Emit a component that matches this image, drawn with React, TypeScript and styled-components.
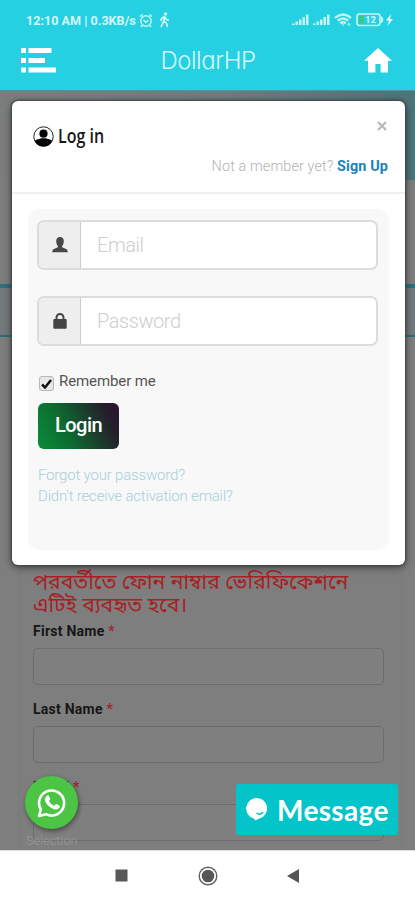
import React from "react";
import styled, { createGlobalStyle } from "styled-components";

const GlobalStyle = createGlobalStyle`
  *, *::before, *::after { box-sizing: border-box; }
  html, body { margin: 0; padding: 0; background: #fff; }
  body { font-family: Roboto, "Noto Sans", sans-serif; overflow: hidden; }
`;

const Screen = styled.div`
  display: flex;
  flex-direction: column;
  width: 415px;
  height: 900px;
  overflow: hidden;
`;

const TopArea = styled.header`
  height: 90px;
  flex: none;
  background: #25d0e3;
  color: #fff;
`;

const StatusBar = styled.div`
  height: 40px;
  padding: 0 21px 0 26px;
  display: flex;
  align-items: center;
  justify-content: space-between;
  color: #d4f7fa;
`;

const StatusGroup = styled.div<{ $gap: number }>`
  display: flex;
  align-items: center;
  gap: ${(p) => p.$gap}px;
`;

const StatusText = styled.span`
  width: 110px;
  flex: none;
  font-size: 12.6px;
  font-weight: 700;
  white-space: nowrap;
`;

const AppBar = styled.div`
  height: 40px;
  padding: 0 23px 0 21px;
  display: grid;
  grid-template-columns: 40px 1fr 40px;
  align-items: center;
`;

const HomeSlot = styled.div`
  display: flex;
  justify-content: flex-end;
`;

const Brand = styled.h1`
  margin: 0;
  padding: 1px 0 0 3px;
  text-align: center;
  font: 300 24px/28px Inter, sans-serif;
  font-feature-settings: "cv11", "ss03";
  letter-spacing: -0.45px;
  color: #d5f8fb;
`;

const Page = styled.main`
  position: relative;
  flex: none;
  height: 760px;
  overflow: hidden;
  background: #7e7e7e;
`;

const Hero = styled.div`
  height: 90px;
  border-top: 1px solid #55939a;
  background: linear-gradient(90deg, #7c7e7e 0%, #6d7c7e 55%, #4d7479 100%);
`;

const HeroGap = styled.div`
  height: 104px;
`;

const TabStrip = styled.div`
  height: 53px;
  border-top: 4px solid #2e6f80;
  border-bottom: 2px solid #277278;
  background: #74797b;
`;

const FormCard = styled.section`
  height: 513px;
  margin: 0 13px 0 19px;
  padding: 236px 19px 0 13px;
  border: solid #797979;
  border-width: 0 1px;
`;

const Notice = styled.p`
  margin: 0;
  width: 340px;
  height: 46px;
  color: #a81f25;
  font: 400 21.1px/23px "Noto Sans Bengali", "Noto Sans", sans-serif;
  white-space: nowrap;
`;

const Label = styled.label`
  display: block;
  height: 29px;
  padding-top: 2px;
  font-size: 14px;
  line-height: 20px;
  font-weight: 700;
  color: #161616;
  letter-spacing: 0.25px;
`;

const Star = styled.span`
  color: #a0272e;
  font-weight: 700;
`;

const Field = styled.div`
  width: 351px;
  height: 37px;
  margin-bottom: 12px;
  border: 1px solid #6c6c6c;
  border-radius: 5px;
  background: #7f7f7f;
`;

const Modal = styled.div`
  position: absolute;
  left: 12px;
  top: 11px;
  width: 393px;
  height: 464px;
  border-radius: 6px;
  background: #fff;
  box-shadow: 0 0 2px 1px #444, 0 2px 8px rgba(0, 0, 0, 0.55);
`;

const ModalHead = styled.div`
  height: 93px;
  padding: 13px 17px 0 21px;
  border-bottom: 2px solid #efefef;
  display: flex;
  flex-direction: column;
`;

const HeadRow = styled.div`
  height: 40px;
  display: flex;
  justify-content: space-between;
`;

const Title = styled.h2`
  margin: 9px 0 0;
  display: flex;
  align-items: center;
  gap: 4px;
  height: 26px;
`;

const TitleText = styled.span`
  font: 650 20px/26px "Open Sans", sans-serif;
  color: #171717;
  transform: scaleX(0.8);
  transform-origin: left;
`;

const Close = styled.button`
  width: 12px;
  height: 24px;
  padding: 0;
  border: 0;
  background: none;
  display: flex;
  align-items: center;
  justify-content: center;
`;

const Prompt = styled.p`
  margin: 3px 0 0;
  text-align: right;
  font-size: 14.4px;
  line-height: 20px;
  font-weight: 300;
  letter-spacing: 0.12px;
  color: #b1b1b1;
`;

const SignUp = styled.a`
  color: #1b82bd;
  font-weight: 700;
`;

const Well = styled.form`
  margin: 15px 16px 0;
  height: 341px;
  padding: 11px 9px 0 9px;
  border-radius: 12px;
  background: #f8f8f8;
`;

const InputGroup = styled.div`
  height: 50px;
  width: 341px;
  margin-bottom: 26px;
  display: flex;
  border: 2px solid #dcdcdc;
  border-radius: 7px;
  overflow: hidden;
  background: #fff;
`;

const Addon = styled.span`
  width: 42px;
  flex: none;
  display: flex;
  align-items: center;
  justify-content: center;
  background: #eee;
  border-right: 1px solid #ccc;
`;

const Input = styled.input`
  flex: 1;
  min-width: 0;
  border: 0;
  outline: 0;
  padding: 0 16px 1px;
  background: transparent;
  font: 300 20px/24px Roboto, sans-serif;
  letter-spacing: -0.45px;
  &::placeholder { color: #cdcdcd; opacity: 1; }
`;

const Remember = styled.div`
  height: 31px;
  display: flex;
  align-items: flex-start;
  gap: 5px;
  padding-left: 2px;
  font-size: 15px;
  line-height: 19px;
  color: #555;
  letter-spacing: -0.1px;
`;

const CheckBox = styled.span`
  width: 15px;
  height: 15px;
  margin-top: 4px;
  border: 1px solid #b7b7b7;
  border-radius: 3px;
  background: #e8e8e8;
  display: flex;
  align-items: center;
  justify-content: center;
`;

const LoginButton = styled.button`
  display: block;
  width: 81px;
  height: 46px;
  margin-left: 1px;
  padding: 0 0 2px;
  border: 0;
  border-radius: 6px;
  background: linear-gradient(65deg, #098c38 0%, #0d6b31 35%, #24202b 82%, #2b1230 100%);
  color: #fff;
  font: 500 20px/24px Roboto, sans-serif;
  letter-spacing: -0.5px;
`;

const HelpLinks = styled.div`
  margin: 16px 0 0 1px;
  display: flex;
  flex-direction: column;
  font-size: 15px;
  line-height: 21px;
  font-weight: 300;
  color: #a5d0d8;
  white-space: nowrap;
`;

const HelpLink = styled.a`
  letter-spacing: -0.18px;
`;

const WhatsApp = styled.button`
  position: absolute;
  left: 25px;
  top: 686px;
  width: 53px;
  height: 53px;
  padding: 0;
  border: 0;
  border-radius: 50%;
  background: #4bc543;
  display: flex;
  align-items: center;
  justify-content: center;
  box-shadow: 1px 2px 5px rgba(0, 0, 0, 0.45);
`;

const MessageButton = styled.button`
  position: absolute;
  left: 236px;
  top: 694px;
  width: 162px;
  height: 51px;
  padding: 0 0 0 10px;
  border: 0;
  border-radius: 3px;
  background: #03c4c9;
  color: #fff;
  display: flex;
  align-items: center;
  gap: 9px;
  font: 700 28px/34px Lato, sans-serif;
  letter-spacing: 0.35px;
`;

const FooterHint = styled.span`
  position: absolute;
  left: 26px;
  top: 744px;
  font-size: 12.5px;
  line-height: 14px;
  color: #929292;
`;

const NavBar = styled.nav`
  height: 50px;
  flex: none;
  background: #fff;
  border-top: 1px solid #ddd;
  padding: 0 115px 0 115px;
  display: flex;
  align-items: center;
  justify-content: space-between;
`;

const Signal = () => (
  <svg width="17" height="12" viewBox="0 0 17 12" fill="#c4f5f5">
    <path d="M0 9.5h2.5V11H0zM3.5 7.5H6V11H3.5zM7 5.5h2.5V11H7zM10.5 3H13v8h-2.5zM14 .5h2.5V11H14z" />
  </svg>
);

const FormField = ({ name }: { name: string }) => (
  <>
    <Label>{name} <Star>*</Star></Label>
    <Field />
  </>
);

export default function App() {
  return (
    <Screen>
      <GlobalStyle />
      <TopArea>
        <StatusBar>
          <StatusGroup $gap={3}>
            <StatusText>12:10 AM | 0.3KB/s</StatusText>
            <svg width="14" height="15" viewBox="0 0 14 15" fill="none" stroke="#c9f6f7" strokeWidth="1.4">
              <circle cx="7" cy="8" r="5.2" />
              <path d="M1 3.5 3.6 1.5M13 3.5 10.4 1.5M4.5 7 7 9.5 9.5 7M3 12.5 2 14M11 12.5 12 14" />
            </svg>
            <svg width="20" height="16" viewBox="0 0 20 16" fill="none" stroke="#d4f7fa" strokeWidth="1.7">
              <circle cx="9.5" cy="2" r="1.7" fill="#d4f7fa" stroke="none" />
              <path d="M8.5 4.5 7.8 9 5 15M8.5 4.5 5.5 6.5 5 9M8.5 4.5 10.5 7.5 13 8.5M8 9 10.5 11.5 11.5 15" />
            </svg>
          </StatusGroup>
          <StatusGroup $gap={4}>
            <Signal />
            <Signal />
            <svg width="18" height="14" viewBox="0 0 18 14" fill="none" stroke="#c4f5f5" strokeWidth="2.3">
              <path d="M1 4.8Q9-1.8 17 4.8M3.7 7.7Q9 3.3 14.3 7.7M6.3 10.3Q9 8.1 11.7 10.3" />
              <path d="M9 13 7.5 11.4h3Z" fill="#c4f5f5" stroke="none" />
              <circle cx="15" cy="11.5" r="1" strokeWidth="1" />
            </svg>
            <svg width="38" height="14" viewBox="0 0 38 14">
              <rect x="1" y="1" width="23" height="11.5" rx="2.5" fill="none" stroke="#c4f5f5" strokeWidth="1.6" />
              <path d="M25.5 3.5 27 6.8 25.5 10Z" fill="#c4f5f5" stroke="#c4f5f5" />
              <rect x="3" y="3" width="4.5" height="7.5" fill="#3cc878" />
              <text x="9" y="10.2" fontFamily="Roboto" fontSize="9.5" fontWeight="700" fill="#d4f7fa">12</text>
              <path d="M35 1 30 7.5h3L31.5 13 37 6h-3Z" fill="#e4fbfc" />
            </svg>
          </StatusGroup>
        </StatusBar>
        <AppBar>
          <svg width="35" height="25" viewBox="0 0 35 25" fill="#fff">
            <path d="M0 0h5v5H0zM7.5 0h23v5h-23zM0 10h5v5H0zM7.5 10h16.5v5H7.5zM0 19.5h5v5H0zM7.5 19.5H35v5H7.5z" />
          </svg>
          <Brand>DollarHP</Brand>
          <HomeSlot>
            <svg width="28" height="25" viewBox="0 0 28 25" fill="#fff">
              <path d="M14 0 28 12.7H24V24.5H16.6V16H11.4V24.5H4V12.7H0Z" />
            </svg>
          </HomeSlot>
        </AppBar>
      </TopArea>

      <Page>
        <Hero />
        <HeroGap />
        <TabStrip />
        <FormCard>
          <Notice>পরবর্তীতে ফোন নাম্বার ভেরিফিকেশনে<br />এটিই ব্যবহৃত হবে।</Notice>
          <FormField name="First Name" />
          <FormField name="Last Name" />
          <FormField name="Email" />
        </FormCard>

        <Modal>
          <ModalHead>
            <HeadRow>
              <Title>
                <svg width="21" height="21" viewBox="0 0 21 21">
                  <circle cx="10.5" cy="10.5" r="9.7" fill="#fff" stroke="#222" strokeWidth="1" />
                  <circle cx="10.5" cy="7.7" r="4.1" fill="#050505" />
                  <path d="M1.6 15C3 13 7 13 8 12.2h5c1 .8 5 .8 6.4 2.8a9.9 9.9 0 0 1-17.8 0Z" fill="#050505" />
                </svg>
                <TitleText>Log in</TitleText>
              </Title>
              <Close aria-label="Close">
                <svg width="10" height="10" viewBox="0 0 10 10" stroke="#b9b9b9" strokeWidth="2.3">
                  <path d="m1 1 8 8M9 1 1 9" />
                </svg>
              </Close>
            </HeadRow>
            <Prompt>Not a member yet? <SignUp>Sign Up</SignUp></Prompt>
          </ModalHead>
          <Well>
            <InputGroup>
              <Addon>
                <svg width="16" height="16" viewBox="0 0 16 16" fill="#484848">
                  <path d="M8 0c2.7 0 3.8 1.7 3.8 4.2 0 2.2-.8 3.7-1.7 4.8v1.3l4 1.7c1 .5 1.6 1.3 1.6 3.2H.3c0-1.9.6-2.7 1.6-3.2l4-1.7V9C5 7.9 4.2 6.4 4.2 4.2 4.2 1.7 5.3 0 8 0Z" />
                </svg>
              </Addon>
              <Input placeholder="Email" />
            </InputGroup>
            <InputGroup>
              <Addon>
                <svg width="14" height="16" viewBox="0 0 14 16">
                  <path d="M3.5 7V4.5a3.5 3.5 0 0 1 7 0V7" fill="none" stroke="#444" strokeWidth="2" />
                  <rect x=".3" y="6" width="13.4" height="9.7" rx="1" fill="#444" />
                </svg>
              </Addon>
              <Input type="password" placeholder="Password" />
            </InputGroup>
            <Remember>
              <CheckBox>
                <svg width="11" height="10" viewBox="0 0 11 10" fill="none" stroke="#111" strokeWidth="2.5">
                  <path d="m1 5.5 3 3L10 1" />
                </svg>
              </CheckBox>
              Remember me
            </Remember>
            <LoginButton type="button">Login</LoginButton>
            <HelpLinks>
              <HelpLink>Forgot your password?</HelpLink>
              <HelpLink>Didn't receive activation email?</HelpLink>
            </HelpLinks>
          </Well>
        </Modal>

        <FooterHint>Selection</FooterHint>
        <WhatsApp aria-label="WhatsApp">
          <svg width="30" height="30" viewBox="0 0 30 30">
            <path d="M2 28 3.9 21.5A12.5 12.5 0 1 1 9 26.2Z" fill="none" stroke="#fff" strokeWidth="2.6" strokeLinejoin="round" />
            <path d="M10.3 7.5c.8-.3 1.5-.1 1.8.7l1 2.4c.2.6 0 1.1-1.1 2.4 1.4 2.6 3 3.9 5.3 4.8 1.3-1.8 1.6-2.1 2.2-1.8l2.8 1.4c.8.5.6 1.7-.1 2.7-1 1.3-3 1.9-5.2 1.1-4.5-1.5-7.6-4.7-8.9-8.2-.7-2.2.3-4.6 2.2-5.5Z" fill="#fff" />
          </svg>
        </WhatsApp>
        <MessageButton>
          <svg width="22" height="23" viewBox="0 0 22 23">
            <path d="M11 0a10.5 10.5 0 0 1 2.5 20.6L9 22.5 8.2 20.7A10.5 10.5 0 0 1 11 0Z" fill="#fff" />
            <path d="M10.5 15Q14 18 17 14" fill="none" stroke="#03c4c9" strokeWidth="1.5" />
          </svg>
          Message
        </MessageButton>
      </Page>

      <NavBar>
        <svg width="13" height="13" viewBox="0 0 13 13"><rect x=".5" y=".5" width="12" height="12" fill="#595959" /></svg>
        <svg width="20" height="20" viewBox="0 0 20 20">
          <circle cx="10" cy="10" r="8.8" fill="none" stroke="#606060" strokeWidth="1.4" />
          <circle cx="10" cy="10" r="6.3" fill="#565656" />
        </svg>
        <svg width="13" height="14" viewBox="0 0 13 14"><path d="M0 7 12 0V14Z" fill="#555" /></svg>
      </NavBar>
    </Screen>
  );
}
